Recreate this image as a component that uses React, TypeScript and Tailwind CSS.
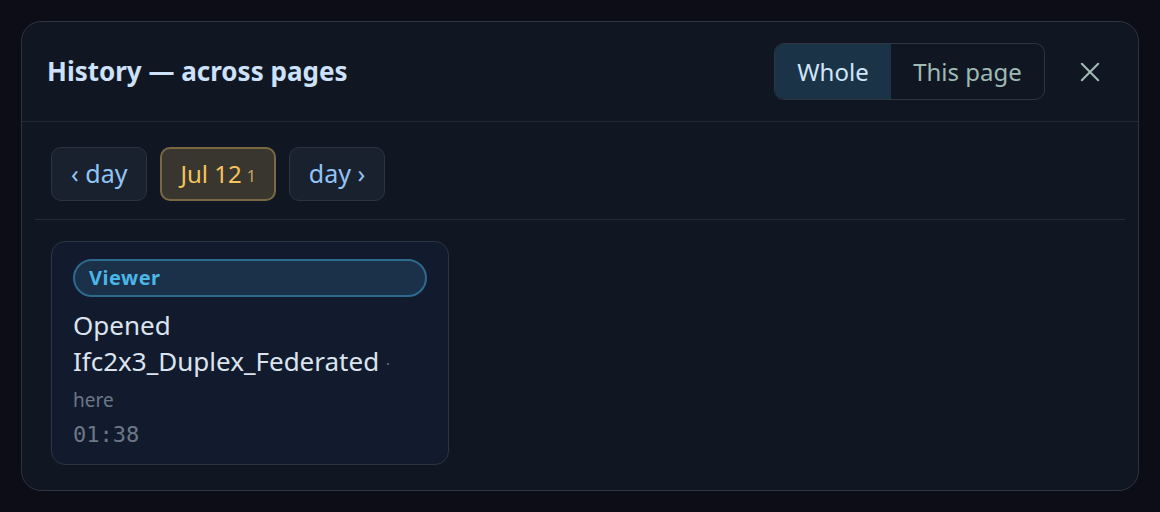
const dayBtn =
  "h-[54px] px-[19px] rounded-[10px] border border-[#2b3442] bg-[#1a212e] text-[25px] text-[#90c4f6] flex items-center";

export default function App() {
  return (
    <div className="w-[1160px] h-[512px] bg-[#0c0d17] p-[21px] font-['Noto_Sans',sans-serif]">
      <div className="h-[470px] rounded-[20px] border border-[#2d3541] bg-[#111722] flex flex-col">
        {/* Header */}
        <div className="h-[100px] shrink-0 flex items-center pl-[25px] pr-[34px] border-b border-[#232a35]">
          <h2 className="text-[26px] font-bold text-[#cde2fa]">History — across pages</h2>
          <div className="ml-auto flex items-center gap-[31px]">
            <div className="flex h-[57px] rounded-[10px] border border-[#2d3541] overflow-hidden text-[24px]">
              <button className="w-[116px] bg-[#1b3346] text-[#cfe6fb]">Whole</button>
              <button className="w-[153px] text-[#9ebab4]">This page</button>
            </div>
            <button className="text-[#9ebab4]">
              <svg width="28" height="28" viewBox="0 0 24 24" fill="none" stroke="currentColor" strokeWidth="1.8" strokeLinecap="round">
                <path d="M5 5l14 14M19 5L5 19" />
              </svg>
            </button>
          </div>
        </div>

        {/* Body */}
        <div className="px-[13px] flex-1 flex flex-col">
          <div className="flex gap-[13px] px-4 pt-[25px] pb-[18px] border-b border-[#232a35]">
            <button className={dayBtn}>‹ day</button>
            <button className="h-[54px] px-[18px] rounded-[10px] border-2 border-[#7a6842] bg-[#38362f] text-[24px] text-[#f6c45d] flex items-center gap-[5px]">
              Jul 12<span className="text-[16px] text-[#c8a462] mt-[4px]">1</span>
            </button>
            <button className={dayBtn}>day ›</button>
          </div>

          <div className="px-4 pt-[21px]">
            <div className="w-[398px] h-[224px] rounded-[14px] border border-[#2b3442] bg-[#121b2d] px-[21px] pt-[17px]">
              <div className="h-[38px] rounded-full border-2 border-[#2e6a8e] bg-[#1b3149] flex items-center px-[14px] text-[20px] font-bold text-[#4bb6e8] tracking-[0.5px]">
                Viewer
              </div>
              <p className="mt-[10px] text-[26px] leading-[36px] text-[#dbe4ee]">
                Opened
                <br />
                Ifc2x3_Duplex_Federated <span className="text-[#6e7a89] text-[14px] align-middle">·</span>
              </p>
              <p className="text-[19px] text-[#6c7787] mt-[5px] leading-[26px]">here</p>
              <p className="mt-[8px] text-[22px] leading-[28px] text-[#6c7787] font-['DejaVu_Sans_Mono',monospace]">01:38</p>
            </div>
          </div>
        </div>
      </div>
    </div>
  );
}
